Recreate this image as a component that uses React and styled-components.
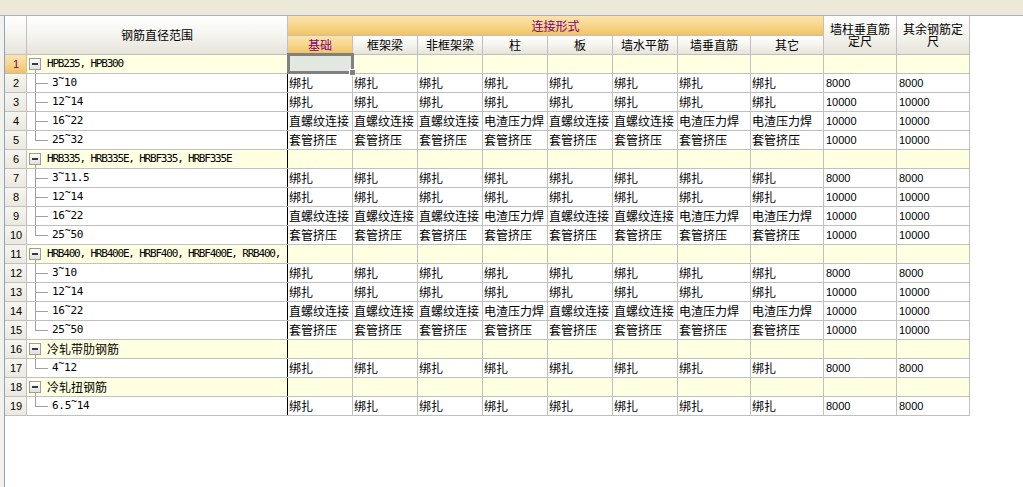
import React from 'react';
import styled, { createGlobalStyle, css } from 'styled-components';

const GlobalStyle = createGlobalStyle`
  html, body { margin: 0; padding: 0; background: #fff; }
  body {
    font-family: "Noto Sans CJK SC", "Liberation Sans", sans-serif;
    font-size: 12px;
    color: #000;
  }
  * { box-sizing: border-box; }
`;

const CJK = `"Noto Sans CJK SC", "Liberation Sans", sans-serif`;
const GRID = '#c0c0c0';
const HEAD_BG = 'linear-gradient(to bottom, #ffffff 0%, #f6f5f0 45%, #e6e4da 100%)';
const ORANGE_BG = 'linear-gradient(to bottom, #fbe3ad 0%, #f7d68b 50%, #f2c263 100%)';
const ROWNUM_BG = 'linear-gradient(to bottom, #f6f5ef 0%, #ebe9df 100%)';
const LINE = '#a0a0a0';

const Window = styled.div`
  width: 100%;
  min-height: 100vh;
  display: flex;
  flex-direction: column;
  background: #fff;
`;

const TopBar = styled.div`
  height: 16px;
  flex: none;
  background: #ece9d8;
  border-bottom: 1px solid #a3b2c5;
`;

const Body = styled.div`
  flex: 1;
  display: flex;
`;

const Gutter = styled.div`
  width: 5px;
  flex: none;
  background: #f1f1ee;
  border-right: 1px solid #8ea2bb;
`;

const Grid = styled.div`
  display: flex;
  flex-direction: column;
  align-self: flex-start;
`;

const Header = styled.div`
  display: flex;
  height: 39px;
  border-bottom: 1px solid ${GRID};
`;

const HeadCell = styled.div`
  width: ${p => p.$w}px;
  flex: none;
  height: 100%;
  border-right: 1px solid ${GRID};
  background: ${p => (p.$active ? ORANGE_BG : HEAD_BG)};
  color: ${p => (p.$active ? '#7a007a' : '#000')};
  display: flex;
  align-items: center;
  justify-content: center;
  text-align: center;
  padding: 0 3px;
  line-height: 12px;
  font-size: 12px;
  font-family: ${CJK};
`;

const HeadGroup = styled.div`
  width: ${p => p.$w}px;
  flex: none;
  display: flex;
  flex-direction: column;
`;

const Band = styled.div`
  height: 20px;
  border-right: 1px solid ${GRID};
  border-bottom: 1px solid ${GRID};
  background: ${ORANGE_BG};
  color: #7a007a;
  display: flex;
  align-items: center;
  justify-content: center;
  font-family: ${CJK};
  line-height: 12px;
`;

const SubRow = styled.div`
  height: 18px;
  display: flex;
`;

const Row = styled.div`
  display: flex;
  height: 19px;
  border-bottom: 1px solid ${GRID};
  background: ${p => (p.$group ? '#ffffe1' : '#fff')};
`;

const RowNum = styled.div`
  width: 22px;
  flex: none;
  height: 100%;
  border-right: 1px solid ${GRID};
  background: ${p => (p.$active ? ORANGE_BG : ROWNUM_BG)};
  color: ${p => (p.$active ? '#7a007a' : '#000')};
  font-family: "Liberation Sans", sans-serif;
  font-size: 11px;
  line-height: 18px;
  text-align: center;
  padding-left: 1px;
`;

const NameCell = styled.div`
  width: 261px;
  flex: none;
  height: 100%;
  border-right: 1px solid #000;
  display: flex;
  align-items: center;
  overflow: hidden;
  white-space: nowrap;
  background: ${p =>
    p.$group
      ? `linear-gradient(${LINE}, ${LINE}) 8px 100% / 1px 50% no-repeat`
      : 'none'};
`;

const ExpandBox = styled.span`
  width: 12px;
  height: 12px;
  flex: none;
  margin-left: 2px;
  margin-right: 6px;
  border: 1px solid #9c9c9c;
  background: linear-gradient(to bottom, #ffffff, #e0e0e0);
  display: flex;
  align-items: center;
  justify-content: center;
  &::before {
    content: '';
    width: 6px;
    height: 2px;
    background: #3a3a3a;
  }
`;

const Guide = styled.span`
  width: 25px;
  flex: none;
  align-self: stretch;
  background:
    linear-gradient(${LINE}, ${LINE}) 8px 0 / 1px ${p => (p.$last ? '50%' : '100%')} no-repeat,
    linear-gradient(${LINE}, ${LINE}) 8px 50% / 13px 1px no-repeat;
`;

const GroupName = styled.span`
  font-family: ${p => (p.$latin ? '"DejaVu Sans Mono", "Liberation Mono", monospace' : CJK)};
  font-size: ${p => (p.$latin ? '11px' : '12px')};
  letter-spacing: ${p => (p.$latin ? '-1.2px' : '0')};
  line-height: 18px;
`;

const RangeLabel = styled.span`
  font-family: "DejaVu Sans Mono", "Liberation Mono", monospace;
  font-size: 11px;
  letter-spacing: -0.3px;
  line-height: 18px;
`;

const Tilde = styled.span`
  vertical-align: 4px;
  font-size: 10px;
  line-height: 0;
`;

const Cell = styled.div`
  width: ${p => p.$w}px;
  flex: none;
  height: 100%;
  border-right: 1px solid ${GRID};
  padding-left: 1px;
  white-space: nowrap;
  overflow: ${p => (p.$selected ? 'visible' : 'hidden')};
  position: ${p => (p.$selected ? 'relative' : 'static')};
  line-height: 18px;
  ${p =>
    p.$num
      ? css`
          font-family: "Liberation Sans", sans-serif;
          font-size: 11px;
          padding-left: 2px;
        `
      : css`
          font-family: ${CJK};
          font-size: 12px;
        `}
`;

const SelectBox = styled.div`
  position: absolute;
  left: -1px;
  top: -2px;
  width: 67px;
  height: 21px;
  border: 3px solid #808080;
  background: #e1e8df;
  z-index: 2;
`;

const Handle = styled.span`
  position: absolute;
  right: -4px;
  bottom: -4px;
  width: 5px;
  height: 5px;
  background: #808080;
  outline: 1px solid #fff;
`;

const SUBS = [
  ['基础', 65, true],
  ['框架梁', 65],
  ['非框架梁', 65],
  ['柱', 65],
  ['板', 65],
  ['墙水平筋', 65],
  ['墙垂直筋', 73],
  ['其它', 73],
];
const COLS = [65, 65, 65, 65, 65, 65, 73, 73, 73, 73];

const A = n => [...Array(8).fill('绑扎'), n, n];
const C = ['直螺纹连接', '直螺纹连接', '直螺纹连接', '电渣压力焊', '直螺纹连接', '直螺纹连接', '电渣压力焊', '电渣压力焊', '10000', '10000'];
const D = [...Array(8).fill('套管挤压'), '10000', '10000'];

const GROUPS = [
  { name: 'HPB235, HPB300', latin: true, items: [['3~10', A('8000')], ['12~14', A('10000')], ['16~22', C], ['25~32', D]] },
  { name: 'HRB335, HRB335E, HRBF335, HRBF335E', latin: true, items: [['3~11.5', A('8000')], ['12~14', A('10000')], ['16~22', C], ['25~50', D]] },
  { name: 'HRB400, HRB400E, HRBF400, HRBF400E, RRB400,', latin: true, items: [['3~10', A('8000')], ['12~14', A('10000')], ['16~22', C], ['25~50', D]] },
  { name: '冷轧带肋钢筋', items: [['4~12', A('8000')]] },
  { name: '冷轧扭钢筋', items: [['6.5~14', A('8000')]] },
];

function Range({ text }) {
  const [a, b] = text.split('~');
  return (
    <RangeLabel>
      {a}
      <Tilde>~</Tilde>
      {b}
    </RangeLabel>
  );
}

export default function App() {
  const rows = [];
  let n = 0;
  GROUPS.forEach((g, gi) => {
    n += 1;
    const first = n === 1;
    rows.push(
      <Row key={`g${gi}`} $group>
        <RowNum $active={first}>{n}</RowNum>
        <NameCell $group>
          <ExpandBox />
          <GroupName $latin={g.latin}>{g.name}</GroupName>
        </NameCell>
        {COLS.map((w, ci) => (
          <Cell key={ci} $w={w} $selected={first && ci === 0}>
            {first && ci === 0 && (
              <SelectBox>
                <Handle />
              </SelectBox>
            )}
          </Cell>
        ))}
      </Row>
    );
    g.items.forEach(([label, vals], ii) => {
      n += 1;
      rows.push(
        <Row key={`r${gi}-${ii}`}>
          <RowNum>{n}</RowNum>
          <NameCell>
            <Guide $last={ii === g.items.length - 1} />
            <Range text={label} />
          </NameCell>
          {COLS.map((w, ci) => (
            <Cell key={ci} $w={w} $num={/^\d+$/.test(vals[ci])}>
              {vals[ci]}
            </Cell>
          ))}
        </Row>
      );
    });
  });

  return (
    <>
      <GlobalStyle />
      <Window>
        <TopBar />
        <Body>
          <Gutter />
          <Grid>
            <Header>
              <HeadCell $w={22} />
              <HeadCell $w={261}>钢筋直径范围</HeadCell>
              <HeadGroup $w={536}>
                <Band>连接形式</Band>
                <SubRow>
                  {SUBS.map(([t, w, act]) => (
                    <HeadCell key={t} $w={w} $active={act}>
                      {t}
                    </HeadCell>
                  ))}
                </SubRow>
              </HeadGroup>
              <HeadCell $w={73}>墙柱垂直筋定尺</HeadCell>
              <HeadCell $w={73}>其余钢筋定尺</HeadCell>
            </Header>
            {rows}
          </Grid>
        </Body>
      </Window>
    </>
  );
}
